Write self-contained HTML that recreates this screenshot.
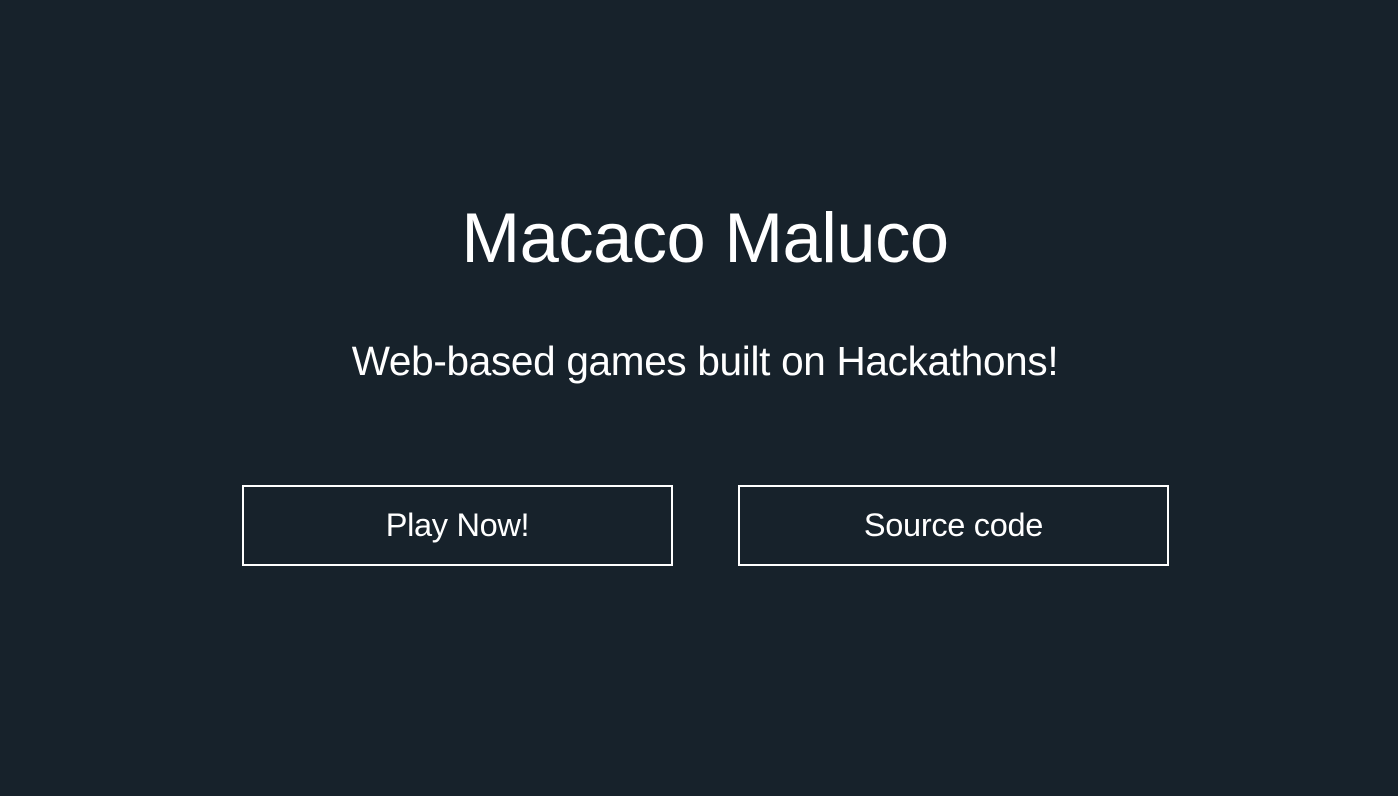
<!DOCTYPE html>
<html><head><style>
html,body{margin:0;padding:0;width:1398px;height:796px;background:#17222b;overflow:hidden;font-family:"Liberation Sans",sans-serif;color:#fff}
.t{position:absolute;left:0;width:1398px;text-align:center;white-space:nowrap}
h1{font-weight:normal;margin:0;font-size:70.5px;top:193px;letter-spacing:-0.5px;line-height:90px;left:6px!important}
.s{font-size:40.5px;top:336px;line-height:50px;letter-spacing:-0.3px;left:6px}
.b{position:absolute;top:485px;width:427px;height:77px;border:2px solid #fff;font-size:32.5px;line-height:77px;text-align:center;letter-spacing:-0.3px}
</style></head><body>
<h1 class="t">Macaco Maluco</h1>
<div class="t s">Web-based games built on Hackathons!</div>
<div class="b" style="left:242px">Play Now!</div>
<div class="b" style="left:738px">Source code</div>
</body></html>
